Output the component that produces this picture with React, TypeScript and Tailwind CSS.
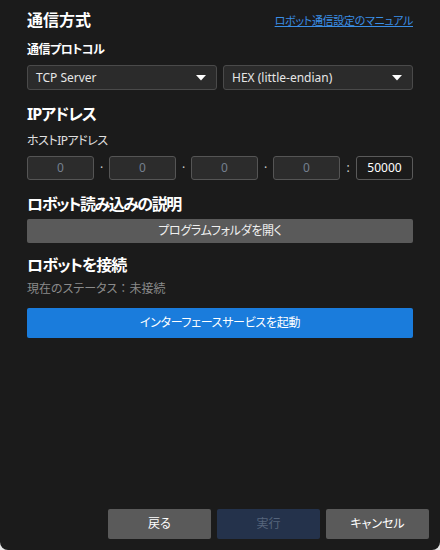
import React from 'react';

const font = { fontFamily: '"Noto Sans", "Noto Sans CJK JP", sans-serif' };

const Caret = () => (
  <svg width="10" height="6" viewBox="0 0 10 6" className="shrink-0">
    <path d="M0 0 H10 L5 5.5 Z" fill="#ffffff" />
  </svg>
);

const Select: React.FC<{ value: string }> = ({ value }) => (
  <div className="flex-1 h-[25px] flex items-center justify-between pl-2 pr-[10px] bg-[#2b2b2b] border border-[#4a4a4a] rounded-[3px] text-[12px] text-[#e6e6e6]">
    <span>{value}</span>
    <Caret />
  </div>
);

const IpBox: React.FC = () => (
  <div className="w-[67px] h-[24px] flex items-center justify-center bg-[#2c2c2c] border border-[#555555] rounded-[3px] text-[12px] text-[#74808f]">
    0
  </div>
);

const Dot = () => <span className="w-[15px] flex justify-center text-[#cfcfcf] text-[12px]">·</span>;

const App: React.FC = () => {
  return (
    <div className="w-[440px] h-[550px] bg-[#e8e8e8] [font-feature-settings:'palt']" style={font}>
      <div className="w-full h-full bg-[#1b1b1b] rounded-b-[8px] flex flex-col">
        <div className="px-[27px] pt-[8px] flex flex-col">
          <div className="flex items-center justify-between h-[24px]">
            <h2 className="text-[16px] font-bold text-white leading-[24px]">通信方式</h2>
            <a className="text-[11px] text-[#3a8ee6] underline mt-[2px] tracking-[-0.3px]">ロボット通信設定のマニュアル</a>
          </div>
          <div className="text-[12px] font-bold text-white mt-[10px] leading-[16px] tracking-[-0.5px]">通信プロトコル</div>
          <div className="flex gap-[6px] mt-[7px]">
            <Select value="TCP Server" />
            <Select value="HEX (little-endian)" />
          </div>

          <h2 className="text-[16px] font-bold text-white mt-[12px] leading-[24px] tracking-[-1px]">IPアドレス</h2>
          <div className="text-[12px] text-[#e0e0e0] mt-[7px] leading-[16px] tracking-[-0.5px]">ホストIPアドレス</div>
          <div className="flex items-center mt-[7px]">
            <IpBox />
            <Dot />
            <IpBox />
            <Dot />
            <IpBox />
            <Dot />
            <IpBox />
            <span className="w-[16px] flex justify-center text-[#cfcfcf] text-[12px]">:</span>
            <div className="flex-1 h-[24px] flex items-center justify-center bg-[#1b1b1b] border border-[#5a5a5a] rounded-[3px] text-[12px] text-white">
              50000
            </div>
          </div>

          <h2 className="text-[16px] font-bold text-white mt-[12px] leading-[24px] tracking-[-1.5px]">ロボット読み込みの説明</h2>
          <button className="h-[24px] mt-[3px] bg-[#5a5a5a] rounded-[2px] text-[12px] text-[#f0f0f0] tracking-[-0.3px]">
            プログラムフォルダを開く
          </button>

          <h2 className="text-[16px] font-bold text-white mt-[10px] leading-[24px] tracking-[-1px]">ロボットを接続</h2>
          <div className="text-[12px] text-[#8a8a8a] mt-[4px] leading-[16px]">
            現在のステータス<span className="[font-feature-settings:normal]">：</span>未接続
          </div>
          <button className="h-[30px] mt-[11px] bg-[#1a7cdc] rounded-[2px] text-[12px] text-white tracking-[-0.3px]">
            インターフェースサービスを起動
          </button>
        </div>

        <div className="mt-auto flex justify-end gap-[6px] pr-[11px] pb-[11px]">
          <button className="w-[103px] h-[30px] bg-[#5a5a5a] rounded-[2px] text-[12px] text-white">戻る</button>
          <button className="w-[103px] h-[30px] bg-[#24324b] rounded-[2px] text-[12px] text-[#56657c]">実行</button>
          <button className="w-[103px] h-[30px] bg-[#5a5a5a] rounded-[2px] text-[12px] text-white">キャンセル</button>
        </div>
      </div>
    </div>
  );
};

export default App;
